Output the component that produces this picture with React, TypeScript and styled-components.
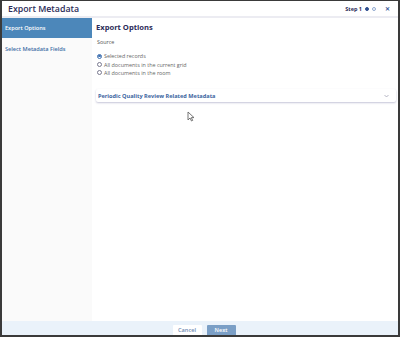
import React, { useState } from 'react';
import styled, { createGlobalStyle } from 'styled-components';

const GlobalStyle = createGlobalStyle`
    html, body {
        margin: 0;
        padding: 0;
        background: #ffffff;
    }
    body {
        font-family: 'Open Sans', 'Liberation Sans', sans-serif;
    }
`;

const Frame = styled.div`
    position: relative;
    width: 400px;
    height: 337px;
    box-sizing: border-box;
    border: 2px solid #3a3a3a;
    border-top-width: 1px;
    display: flex;
    flex-direction: column;
    overflow: hidden;
    background: #fff;
`;

const Header = styled.div`
    height: 15px;
    flex: none;
    display: flex;
    align-items: center;
    padding: 0 8px 0 6px;
    border-bottom: 2px solid #ececf2;
`;

const Title = styled.h1`
    margin: 0;
    font-size: 8.8px;
    font-weight: 600;
    color: #2b2b58;
    flex: 1;
`;

const StepText = styled.span`
    font-size: 5.5px;
    font-weight: 700;
    color: #2b2b58;
    margin-right: 3px;
`;

const Dot = styled.span<{ $filled?: boolean }>`
    width: 4px;
    height: 4px;
    border-radius: 50%;
    box-sizing: border-box;
    margin-right: 3px;
    background: ${(p) => (p.$filled ? '#2f4f8f' : '#fff')};
    border: 1px solid ${(p) => (p.$filled ? '#2f4f8f' : '#8fa8cf')};
`;

const Close = styled.span`
    margin-left: 6px;
    font-size: 6px;
    font-weight: 700;
    color: #3a5a99;
    line-height: 1;
`;

const Body = styled.div`
    flex: 1;
    display: flex;
    min-height: 0;
`;

const Sidebar = styled.nav`
    width: 90px;
    flex: none;
    background: #fafafa;
    display: flex;
    flex-direction: column;
`;

const NavItem = styled.div<{ $active?: boolean }>`
    height: ${(p) => (p.$active ? '20px' : '21px')};
    display: flex;
    align-items: center;
    padding-left: 3px;
    font-size: 5.6px;
    font-weight: 600;
    color: ${(p) => (p.$active ? '#ffffff' : '#3e6ea6')};
    background: ${(p) => (p.$active ? '#4c87ba' : 'transparent')};
`;

const Content = styled.main`
    flex: 1;
    padding: 0 2px 0 4px;
    display: flex;
    flex-direction: column;
`;

const Heading = styled.h2`
    margin: 0;
    height: 17px;
    display: flex;
    align-items: center;
    font-size: 7.6px;
    font-weight: 700;
    color: #2b2b58;
`;

const Label = styled.div`
    font-size: 5.4px;
    color: #555;
    margin-top: 3px;
    margin-left: 1px;
    margin-bottom: 7px;
`;

const RadioList = styled.div`
    display: flex;
    flex-direction: column;
    gap: 1.8px;
    margin-left: 1px;
`;

const RadioRow = styled.label`
    display: flex;
    align-items: center;
    height: 6.5px;
    font-size: 5.4px;
    color: #666;
    gap: 2px;
`;

const RadioMark = styled.span<{ $checked?: boolean }>`
    width: 5px;
    height: 5px;
    border-radius: 50%;
    box-sizing: border-box;
    border: 0.8px solid ${(p) => (p.$checked ? '#3d6fb0' : '#7a7a90')};
    display: flex;
    align-items: center;
    justify-content: center;

    &::after {
        content: '';
        width: 2.4px;
        height: 2.4px;
        border-radius: 50%;
        background: ${(p) => (p.$checked ? '#3d6fb0' : 'transparent')};
    }
`;

const Accordion = styled.div`
    margin-top: 13px;
    height: 13px;
    display: flex;
    align-items: center;
    justify-content: space-between;
    padding: 0 7px 0 2px;
    background: #fff;
    border-radius: 2px;
    box-shadow: 0 1px 2px rgba(90, 90, 140, 0.35);
`;

const AccordionTitle = styled.span`
    font-size: 5.6px;
    font-weight: 700;
    color: #3b64a0;
`;

const Footer = styled.footer`
    height: 14px;
    flex: none;
    background: #eaf2fa;
    display: flex;
    justify-content: center;
    align-items: flex-start;
    gap: 5px;
    padding-top: 4px;
    box-sizing: border-box;
    padding-left: 8px;
`;

const FooterButton = styled.button<{ $primary?: boolean }>`
    width: 29px;
    height: 13px;
    border: none;
    border-radius: 1px;
    padding: 0 0 3px;
    font-family: inherit;
    font-size: 5.6px;
    font-weight: 600;
    color: ${(p) => (p.$primary ? '#ffffff' : '#6f8bb3')};
    background: ${(p) => (p.$primary ? '#7b9fc6' : '#ffffff')};
`;

const Pointer = styled.svg`
    position: absolute;
    left: 185px;
    top: 110px;
`;

const sources = [
    'Selected records',
    'All documents in the current grid',
    'All documents in the room',
];

function App() {
    const [selected, setSelected] = useState(0);

    return (
        <>
            <GlobalStyle />
            <Frame>
                <Header>
                    <Title>Export Metadata</Title>
                    <StepText>Step 1</StepText>
                    <Dot $filled />
                    <Dot />
                    <Close>✕</Close>
                </Header>
                <Body>
                    <Sidebar>
                        <NavItem $active>Export Options</NavItem>
                        <NavItem>Select Metadata Fields</NavItem>
                    </Sidebar>
                    <Content>
                        <Heading>Export Options</Heading>
                        <Label>Source</Label>
                        <RadioList>
                            {sources.map((s, i) => (
                                <RadioRow key={s} onClick={() => setSelected(i)}>
                                    <RadioMark $checked={selected === i} />
                                    {s}
                                </RadioRow>
                            ))}
                        </RadioList>
                        <Accordion>
                            <AccordionTitle>
                                Periodic Quality Review Related Metadata
                            </AccordionTitle>
                            <svg width="5" height="4" viewBox="0 0 10 6">
                                <path
                                    d="M1 1l4 4 4-4"
                                    fill="none"
                                    stroke="#9a9aae"
                                    strokeWidth="1.4"
                                />
                            </svg>
                        </Accordion>
                    </Content>
                </Body>
                <Footer>
                    <FooterButton>Cancel</FooterButton>
                    <FooterButton $primary>Next</FooterButton>
                </Footer>
                <Pointer width="8" height="11" viewBox="0 0 8 11">
                    <path
                        d="M1 1v8l2-2 1.5 3 1.2-.6L4.3 6.6H7z"
                        fill="#fff"
                        stroke="#666"
                        strokeWidth="0.9"
                        strokeLinejoin="round"
                    />
                </Pointer>
            </Frame>
        </>
    );
}

export default App;
